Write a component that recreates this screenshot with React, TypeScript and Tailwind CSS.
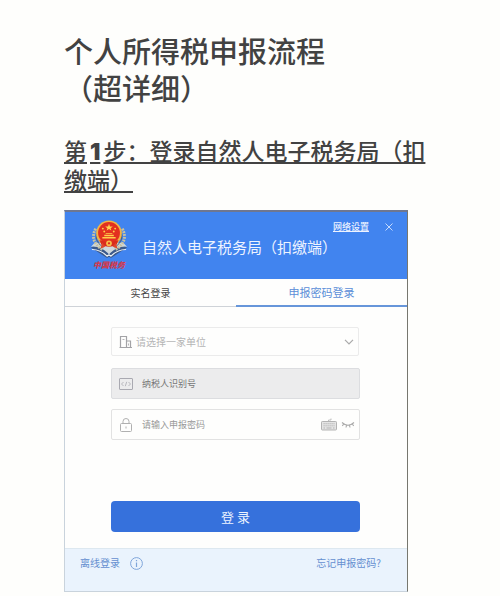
import type { ReactNode } from 'react'

const CJK = "font-['Noto_Sans_CJK_SC',sans-serif]"

function Emblem() {
  return (
    <svg viewBox="0 0 40 42" className="h-10 w-[38px]" aria-hidden="true">
      {/* open book */}
      <path d="M1 29 L9 25 L20 35 L31 25 L39 29 L22 40 Q20 38 18 40 Z" fill="#3c5a8c" />
      <path d="M1 28 Q11 27 19 35 L20 37 L21 35 Q29 27 39 28 L35 24 H5 Z" fill="#cfd8dd" />
      <path d="M2 31 Q11 31 18 38 Q20 36 22 38 Q29 31 38 31" fill="none" stroke="#eef2f4" strokeWidth="1.3" />
      {/* wheat ears */}
      <path d="M6 9 Q-1 22 13 31" fill="none" stroke="#c9c2a0" strokeWidth="3" strokeDasharray="2 1" />
      <path d="M34 9 Q41 22 27 31" fill="none" stroke="#c9c2a0" strokeWidth="3" strokeDasharray="2 1" />
      <path d="M8 12 Q3 21 14 29 M32 12 Q37 21 26 29" fill="none" stroke="#515f72" strokeWidth="1" />
      {/* national emblem */}
      <circle cx="20" cy="14" r="13.5" fill="#f2b544" />
      <circle cx="20" cy="13.5" r="11.5" fill="#e3301f" />
      <path d="M20 4 L21 6.7 L24 6.8 L21.7 8.5 L22.5 11 L20 9.5 L17.5 11 L18.3 8.5 L16 6.8 L19 6.7 Z" fill="#ffd34f" />
      <g fill="#ffcf4a">
        <circle cx="13.5" cy="9" r="1" />
        <circle cx="15" cy="12" r="1" />
        <circle cx="25" cy="12" r="1" />
        <circle cx="26.5" cy="9" r="1" />
        <path d="M16 14.5 L17 13.5 H23 L24 14.5 Z M15 15.5 H25 V17 H15 Z M13 17.8 H27 V19.5 H13 Z" />
      </g>
      <path d="M10 21 Q20 25 30 21 L28 26 Q20 30 12 26 Z" fill="#d92b1e" />
      <circle cx="20" cy="24.5" r="3" fill="#f5bd47" />
      <circle cx="20" cy="24.5" r="1.2" fill="#d92b1e" />
      <path d="M13 24 L11 30 L16 28 Z M27 24 L29 30 L24 28 Z" fill="#e0452a" />
    </svg>
  )
}

function BuildingIcon() {
  return (
    <svg viewBox="0 0 14 14" className="h-3.5 w-3.5" fill="none" stroke="#a3a3a6" strokeWidth="1.2" aria-hidden="true">
      <path d="M1.5 12.5 V1.5 H7.5 V12.5 M7.5 6 H11.5 V12.5 M0.5 12.5 H13" />
      <path d="M3.5 4.5 H5.5 M9.5 8.5 V10.5" strokeWidth="0.8" />
    </svg>
  )
}

function CodeIcon() {
  return (
    <svg viewBox="0 0 14 12" className="h-3 w-3.5" fill="none" stroke="#a9a9b1" strokeWidth="1" aria-hidden="true">
      <rect x="0.5" y="0.5" width="13" height="11" rx="0.5" />
      <path d="M4.5 4 L2.5 6 L4.5 8 M9.5 4 L11.5 6 L9.5 8 M7.7 3.8 L6.3 8.2" strokeWidth="0.8" />
    </svg>
  )
}

function LockIcon() {
  return (
    <svg viewBox="0 0 12 14" className="h-3.5 w-3" fill="none" stroke="#b0b0b0" strokeWidth="1" aria-hidden="true">
      <rect x="0.5" y="5.5" width="11" height="8" rx="1" />
      <path d="M3 5.5 V3.5 A3 3 0 0 1 9 3.5 V5.5 M6 8.5 V10.5" />
    </svg>
  )
}

function KeyboardIcon() {
  return (
    <svg viewBox="0 0 16 13" className="h-[13px] w-4" fill="none" stroke="#b3b3b3" strokeWidth="1" aria-hidden="true">
      <rect x="0.5" y="3.5" width="15" height="8.5" rx="0.8" fill="#e4e4e4" />
      <path d="M7.5 3.5 V2 H10 V0.5" strokeWidth="0.8" />
      <path d="M2.5 5.7 H13.5 M2.5 7.8 H13.5" strokeDasharray="1.2 0.8" />
      <path d="M2.5 10 H4 M5.5 10 H10.5 M12 10 H13.5" />
    </svg>
  )
}

function ClosedEyeIcon() {
  return (
    <svg viewBox="0 0 14 8" className="h-2 w-3.5" fill="none" stroke="#a8a8a8" strokeWidth="1.1" aria-hidden="true">
      <path d="M1 1.5 Q7 7 13 1.5 M2.8 3 L1.3 4.8 M5.5 4.3 L5 6.5 M8.5 4.3 L9 6.5 M11.2 3 L12.7 4.8" />
    </svg>
  )
}

function Field({ id, label, icon, className, children }: {
  id: string
  label: string
  icon: ReactNode
  className: string
  children: ReactNode
}) {
  return (
    <div className={`flex items-center rounded-xs border ${className}`}>
      <label htmlFor={id} aria-label={label} className="flex w-4 shrink-0 justify-center">{icon}</label>
      {children}
    </div>
  )
}

export default function App() {
  return (
    <main className={`min-h-screen bg-[#fefefc] pt-8 pr-[72px] pb-1 pl-16 text-[#424242] ${CJK}`}>
      <h1 className="text-[29px] leading-[37px] font-medium">
        个人所得税申报流程<br />（超详细）
      </h1>

      <h2 className="mt-[30px] text-[23px] leading-[29px] font-medium underline decoration-2 underline-offset-2">
        第<span className="px-[3px] font-['Inter',sans-serif] leading-none font-black [text-decoration-skip-ink:none]">1</span>步：登录自然人电子税务局（扣缴端）
      </h2>

      <section className="mt-4 mr-5 border border-t-2 border-[#c9d3dc] border-t-[#6f7791] border-r-[#77776f] bg-[#fefefd]">
        <header className="flex h-[67px] bg-[#4184ef] text-[#edf3ff]">
          <div className="flex w-[77px] shrink-0 flex-col items-center pt-2 pl-[11px]">
            <Emblem />
            <span className="text-[8px] leading-[10px] font-black text-[#d1394c] italic">中国税务</span>
          </div>
          <div className="flex min-w-0 flex-1 flex-col">
            <div className="flex items-center justify-end gap-4 pt-[7px] pr-3.5">
              <a href="#network" className="text-[9px] leading-[16px] font-medium underline">网络设置</a>
              <button type="button" aria-label="关闭">
                <svg viewBox="0 0 8 8" className="h-2 w-2" fill="none" stroke="#c5dafc" strokeWidth="1" aria-hidden="true">
                  <path d="M0.5 0.5 L7.5 7.5 M7.5 0.5 L0.5 7.5" />
                </svg>
              </button>
            </div>
            <p className="text-[15px] leading-6">自然人电子税务局（扣缴端）</p>
          </div>
        </header>

        <nav className="grid h-7 grid-cols-2 text-[11px]">
          <button type="button" className="border-b border-[#cfd3d8] pb-px text-[10px] text-[#444]">实名登录</button>
          <button type="button" className="border-b-2 border-[#6796da] text-[#5b8ed8]">申报密码登录</button>
        </nav>

        <form className="flex flex-col pt-5 pr-[47px] pb-4 pl-[46px]" onSubmit={e => e.preventDefault()}>
          <Field id="company" label="单位" icon={<BuildingIcon />} className="mr-px h-[29px] border-[#ebebeb] pr-1 pl-1.5">
            <select id="company" className="h-full min-w-0 flex-1 appearance-none bg-transparent pl-0.5 text-[10px] text-[#b5b5b5]">
              <option>请选择一家单位</option>
            </select>
            <svg viewBox="0 0 10 6" className="h-1.5 w-2.5" fill="none" stroke="#aaa" strokeWidth="1.2" aria-hidden="true">
              <path d="M1 0.8 L5 5 L9 0.8" />
            </svg>
          </Field>

          <Field id="taxpayer" label="纳税人识别号" icon={<CodeIcon />} className="mt-3 h-[31px] border-[#dcdde0] bg-[#ececed] px-1.5">
            <input
              id="taxpayer"
              disabled
              placeholder="纳税人识别号"
              className="h-full min-w-0 flex-1 bg-transparent pl-2 text-[9px] placeholder:text-[#777]"
            />
          </Field>

          <Field id="password" label="申报密码" icon={<LockIcon />} className="mt-2.5 h-[31px] border-[#e2e2e2] pr-1 pl-1.5">
            <input
              id="password"
              type="password"
              placeholder="请输入申报密码"
              className="h-full min-w-0 flex-1 bg-transparent pl-2 text-[9px] placeholder:text-[#999]"
            />
            <div className="flex items-center gap-1">
              <KeyboardIcon />
              <ClosedEyeIcon />
            </div>
          </Field>

          <button type="submit" className="mt-[61px] h-[31px] rounded-sm bg-[#3671dc] text-[13px] text-[#edf3ff]">
            登 录
          </button>
        </form>

        <footer className="flex h-[43px] items-start justify-between border-t border-[#dde8f0] bg-[#eaf3fd] pt-[5px] pr-[26px] pl-[15px] text-[10px] leading-[18px] text-[#658fd0]">
          <div className="flex items-center gap-2.5">
            <a href="#offline">离线登录</a>
            <svg viewBox="0 0 13 13" className="h-[13px] w-[13px]" fill="none" stroke="#7fa5da" strokeWidth="1" aria-hidden="true">
              <circle cx="6.5" cy="6.5" r="5.9" />
              <path d="M6.5 5.5 V10 M6.5 3 V4.2" strokeWidth="1.2" />
            </svg>
          </div>
          <a href="#forgot">忘记申报密码?</a>
        </footer>
      </section>
    </main>
  )
}
